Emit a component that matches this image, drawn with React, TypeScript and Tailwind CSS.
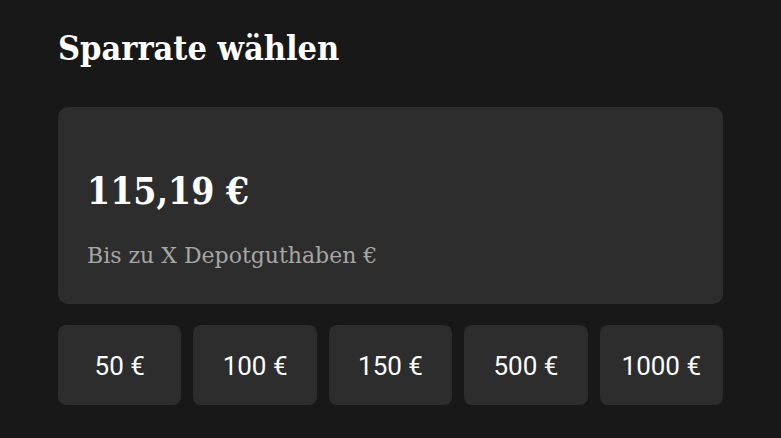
import React from "react";

const amounts = ["50 €", "100 €", "150 €", "500 €", "1000 €"];

export default function App() {
  return (
    <div className="w-[781px] h-[438px] overflow-hidden bg-[#181818] px-[58px] pt-[26px] text-white">
      <h2 className="font-['DejaVu_Serif_Condensed','DejaVu_Serif',serif] text-[34px] leading-[44px] font-bold">
        Sparrate wählen
      </h2>

      <div className="mt-[37px] flex h-[197px] flex-col rounded-[10px] bg-[#2d2d2d] px-[29px] pt-[60px]">
        <div className="font-['DejaVu_Serif_Condensed','DejaVu_Serif',serif] text-[37px] leading-[48px] font-bold">
          115,19 €
        </div>
        <div className="mt-[27px] font-['DejaVu_Serif',serif] text-[22px] leading-[28px] text-[#a6a6a6]">
          Bis zu X Depotguthaben €
        </div>
      </div>

      <div className="mt-[21px] grid grid-cols-5 gap-[12px]">
        {amounts.map((a) => (
          <button
            key={a}
            className="h-[80px] rounded-[8px] bg-[#2d2d2d] pt-[3px] font-['Roboto','Noto_Sans',sans-serif] text-[26px] text-white"
          >
            {a}
          </button>
        ))}
      </div>
    </div>
  );
}
